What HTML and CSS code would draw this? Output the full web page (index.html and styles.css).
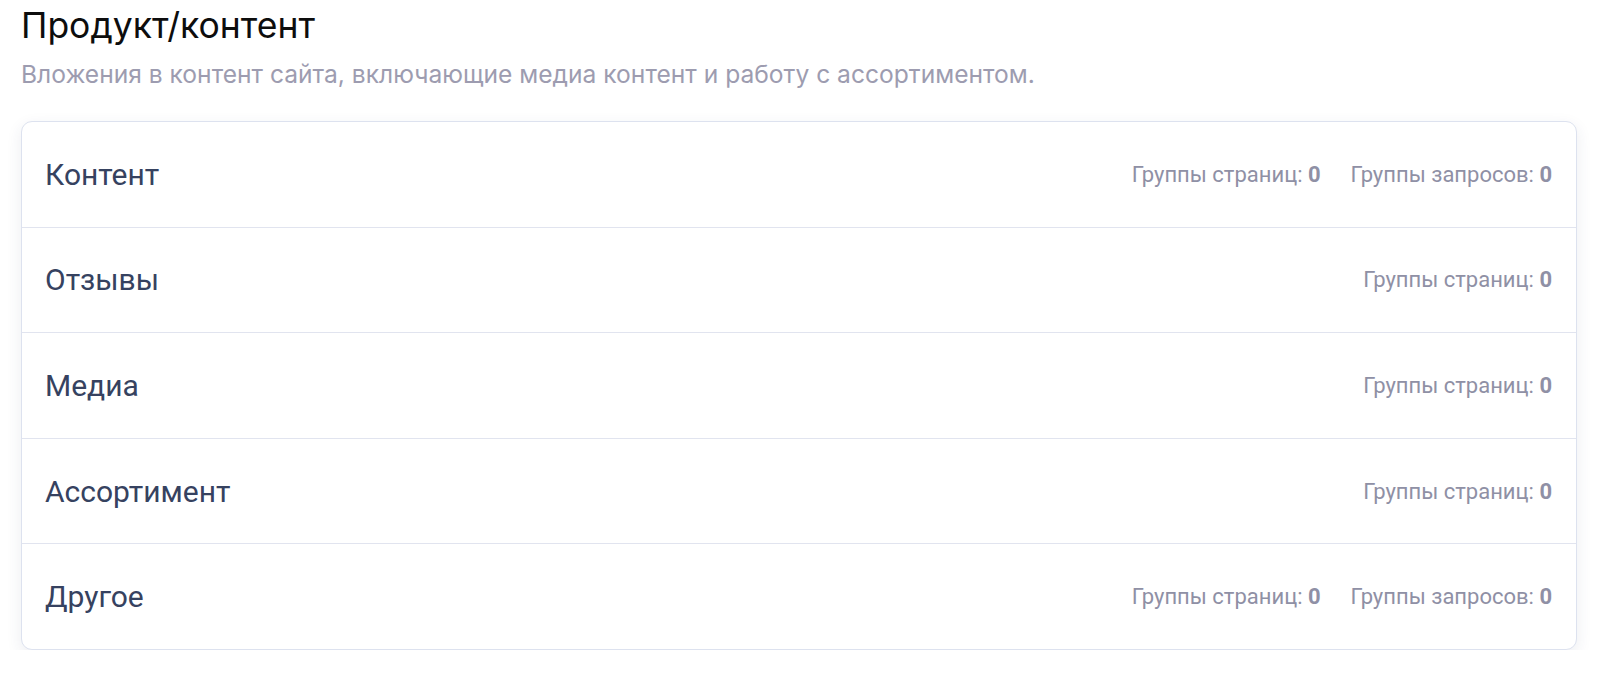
FILE: index.html
```html
<!DOCTYPE html>
<html lang="ru">
<head>
<meta charset="utf-8">
<link rel="stylesheet" href="styles.css">
</head>
<body>
<div class="page">
  <h1 class="title">Продукт/контент</h1>
  <p class="subtitle">Вложения в контент сайта, включающие медиа контент и работу с ассортиментом.</p>
  <div class="card">
    <div class="row">
      <div class="label">Контент</div>
      <div class="stats"><span class="stat">Группы страниц: <b>0</b></span><span class="stat">Группы запросов: <b>0</b></span></div>
    </div>
    <div class="row">
      <div class="label">Отзывы</div>
      <div class="stats"><span class="stat">Группы страниц: <b>0</b></span></div>
    </div>
    <div class="row">
      <div class="label">Медиа</div>
      <div class="stats"><span class="stat">Группы страниц: <b>0</b></span></div>
    </div>
    <div class="row">
      <div class="label">Ассортимент</div>
      <div class="stats"><span class="stat">Группы страниц: <b>0</b></span></div>
    </div>
    <div class="row">
      <div class="label">Другое</div>
      <div class="stats"><span class="stat">Группы страниц: <b>0</b></span><span class="stat">Группы запросов: <b>0</b></span></div>
    </div>
  </div>
</div>
</body>
</html>
```
FILE: styles.css
```css
html, body {
  margin: 0;
  padding: 0;
  background: #ffffff;
}
body {
  font-family: Roboto, "Noto Sans", sans-serif;
}
.page {
  padding: 6px 0 0 21px;
  width: 1556px;
}
.title {
  margin: 0;
  font-family: Inter, Roboto, sans-serif;
  font-size: 35.5px;
  font-weight: 400;
  line-height: 40px;
  color: #0d0d0d;
}
.subtitle {
  margin: 14px 0 0 0;
  font-family: Inter, Roboto, sans-serif;
  font-size: 24.6px;
  line-height: 28px;
  color: #9d9cb0;
}
.card {
  margin-top: 33px;
  border: 1px solid #dde2ef;
  border-radius: 11px;
  background: #fff;
  box-shadow: 0 5px 16px rgba(40, 50, 100, 0.09);
}
.row {
  height: 104.6px;
  display: flex;
  align-items: center;
  justify-content: space-between;
  padding: 0 24px 0 23px;
  border-bottom: 1px solid #e1e4ef;
}
.row:last-child {
  border-bottom: none;
}
.label {
  font-size: 30px;
  color: #364260;
}
.stats {
  display: flex;
  gap: 30px;
}
.stat {
  font-size: 22px;
  color: #8f90a5;
}
.stat b {
  font-weight: 700;
}
```
